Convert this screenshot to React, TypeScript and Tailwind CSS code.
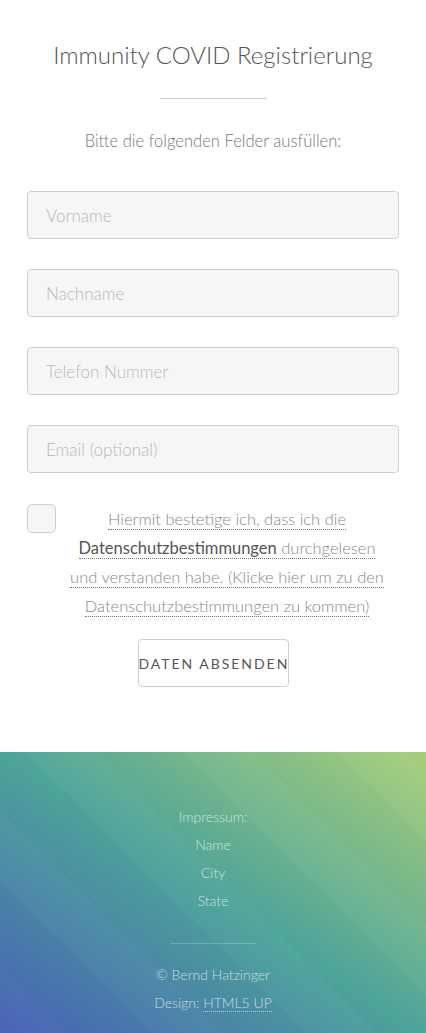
import React from "react";

const fields = ["Vorname", "Nachname", "Telefon Nummer", "Email (optional)"];

const footerLines = ["Impressum:", "Name", "City", "State"];

export default function App() {
  return (
    <div className="min-h-screen bg-white font-['Lato',sans-serif] font-light">
      <section className="px-[27px] pt-[36px] pb-[65px] text-center">
        <h2 className="text-[24px] leading-[38px] text-[#555]">
          Immunity COVID Registrierung
        </h2>
        <hr className="mx-auto mt-[24px] w-[107px] border-0 border-t border-[#ccc]" />
        <p className="mt-[28px] text-[16.6px] leading-[28px] text-[#777]">
          Bitte die folgenden Felder ausfüllen:
        </p>

        <form className="mt-[36px] flex flex-col gap-[30px]">
          {fields.map((f) => (
            <input
              key={f}
              type="text"
              placeholder={f}
              className="h-[48px] w-full rounded-[4px] border border-[#cfcfcf] bg-[#f6f6f6] px-[18px] text-[17px] font-light text-[#555] outline-none placeholder:text-[#b8b8b8]"
            />
          ))}

          <div className="flex items-start">
            <span className="mt-[1px] h-[29px] w-[29px] shrink-0 rounded-[5px] border border-[#cfcfcf] bg-[#f6f6f6]" />
            <p className="mt-[2px] flex-1 pl-[12px] pr-[13px] text-center text-[16.5px] leading-[29px] text-[#888]">
              <a className="border-b border-dotted border-[#777]">
                Hiermit bestetige ich, dass ich die{" "}
                <strong className="font-normal text-[#555]">
                  Datenschutzbestimmungen
                </strong>{" "}
                durchgelesen und verstanden habe. (Klicke hier um zu den
                Datenschutzbestimmungen zu kommen)
              </a>
            </p>
          </div>

          <div className="-mt-[12px] flex justify-center">
            <button
              type="button"
              className="h-[48px] w-[151px] whitespace-nowrap rounded-[4px] border border-[#cfcfcf] bg-white px-0 text-[14px] font-normal tracking-[0.14em] text-[#555]"
            >
              DATEN ABSENDEN
            </button>
          </div>
        </form>
      </section>

      <footer className="relative bg-[linear-gradient(to_top_right,#4760b7_0%,#4ea59b_50%,#aad07b_100%)] pb-[20px] pt-[51px] text-center text-[14px] leading-[28px] text-white/70">
        <div className="pointer-events-none absolute inset-0 bg-[repeating-linear-gradient(45deg,rgba(255,255,255,0.015)_0px,rgba(255,255,255,0.015)_50px,rgba(0,0,0,0.012)_50px,rgba(0,0,0,0.012)_110px)]" />
        <div className="relative">
          {footerLines.map((l) => (
            <p key={l}>{l}</p>
          ))}
          <hr className="mx-auto mb-[17px] mt-[28px] w-[86px] border-0 border-t border-white/20" />
          <p>© Bernd Hatzinger</p>
          <p>
            Design:{" "}
            <a className="border-b border-dotted border-white/60">HTML5 UP</a>
          </p>
        </div>
      </footer>
    </div>
  );
}
